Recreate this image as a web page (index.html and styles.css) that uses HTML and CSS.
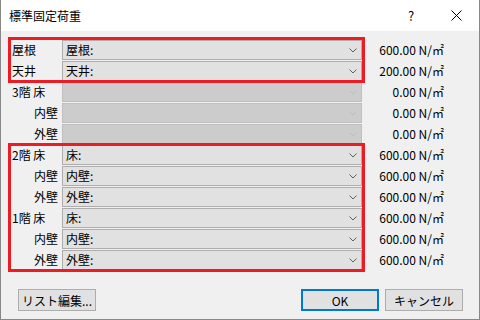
FILE: index.html
```html
<!DOCTYPE html>
<html lang="ja">
<head>
    <meta charset="UTF-8">
    <meta name="viewport" content="width=device-width, initial-scale=1.0">
    <title>標準固定荷重</title>
    <link rel="stylesheet" href="styles.css">
</head>
<body>
    <div class="window">
        <div class="titlebar">
            <span class="title">標準固定荷重</span>
            <span class="cap-btn help">?</span>
            <span class="cap-btn close">
                <svg width="11" height="11" viewBox="0 0 11 11"><path d="M0.5 0.5L10.5 10.5M10.5 0.5L0.5 10.5" stroke="#000" stroke-width="1" fill="none"/></svg>
            </span>
        </div>

        <div class="content">
            <div class="rows">
                <div class="row">
                    <span class="label">屋根</span>
                    <div class="combo"><span>屋根:</span><svg class="chev" width="8" height="5" viewBox="0 0 8 5"><path d="M0.5 0.5L4 4L7.5 0.5" /></svg></div>
                    <span class="value">600.00 N/㎡</span>
                </div>
                <div class="row">
                    <span class="label">天井</span>
                    <div class="combo"><span>天井:</span><svg class="chev" width="8" height="5" viewBox="0 0 8 5"><path d="M0.5 0.5L4 4L7.5 0.5" /></svg></div>
                    <span class="value">200.00 N/㎡</span>
                </div>
                <div class="row">
                    <span class="label">3階 床</span>
                    <div class="combo disabled"><span></span><svg class="chev" width="8" height="5" viewBox="0 0 8 5"><path d="M0.5 0.5L4 4L7.5 0.5" /></svg></div>
                    <span class="value">0.00 N/㎡</span>
                </div>
                <div class="row">
                    <span class="label sub">内壁</span>
                    <div class="combo disabled"><span></span><svg class="chev" width="8" height="5" viewBox="0 0 8 5"><path d="M0.5 0.5L4 4L7.5 0.5" /></svg></div>
                    <span class="value">0.00 N/㎡</span>
                </div>
                <div class="row">
                    <span class="label sub">外壁</span>
                    <div class="combo disabled"><span></span><svg class="chev" width="8" height="5" viewBox="0 0 8 5"><path d="M0.5 0.5L4 4L7.5 0.5" /></svg></div>
                    <span class="value">0.00 N/㎡</span>
                </div>
                <div class="row">
                    <span class="label">2階 床</span>
                    <div class="combo"><span>床:</span><svg class="chev" width="8" height="5" viewBox="0 0 8 5"><path d="M0.5 0.5L4 4L7.5 0.5" /></svg></div>
                    <span class="value">600.00 N/㎡</span>
                </div>
                <div class="row">
                    <span class="label sub">内壁</span>
                    <div class="combo"><span>内壁:</span><svg class="chev" width="8" height="5" viewBox="0 0 8 5"><path d="M0.5 0.5L4 4L7.5 0.5" /></svg></div>
                    <span class="value">600.00 N/㎡</span>
                </div>
                <div class="row">
                    <span class="label sub">外壁</span>
                    <div class="combo"><span>外壁:</span><svg class="chev" width="8" height="5" viewBox="0 0 8 5"><path d="M0.5 0.5L4 4L7.5 0.5" /></svg></div>
                    <span class="value">600.00 N/㎡</span>
                </div>
                <div class="row">
                    <span class="label">1階 床</span>
                    <div class="combo"><span>床:</span><svg class="chev" width="8" height="5" viewBox="0 0 8 5"><path d="M0.5 0.5L4 4L7.5 0.5" /></svg></div>
                    <span class="value">600.00 N/㎡</span>
                </div>
                <div class="row">
                    <span class="label sub">内壁</span>
                    <div class="combo"><span>内壁:</span><svg class="chev" width="8" height="5" viewBox="0 0 8 5"><path d="M0.5 0.5L4 4L7.5 0.5" /></svg></div>
                    <span class="value">600.00 N/㎡</span>
                </div>
                <div class="row">
                    <span class="label sub">外壁</span>
                    <div class="combo"><span>外壁:</span><svg class="chev" width="8" height="5" viewBox="0 0 8 5"><path d="M0.5 0.5L4 4L7.5 0.5" /></svg></div>
                    <span class="value">600.00 N/㎡</span>
                </div>
            </div>

            <!-- annotation frames drawn over the rows -->
            <div class="mark mark-roof"></div>
            <div class="mark mark-floors"></div>

            <div class="buttons">
                <button class="btn">リスト編集...</button>
                <button class="btn btn-ok">OK</button>
                <button class="btn">キャンセル</button>
            </div>
        </div>
    </div>
</body>
</html>
```

FILE: styles.css
```css
body { margin: 0; font-family: "Noto Sans CJK JP", "DejaVu Sans", sans-serif; font-size: 12px; color: #000; }
.window { width: 480px; height: 320px; box-sizing: border-box; border: 1px solid #888; border-top: none; background-color: #f0f0f0; display: flex; flex-direction: column; }

.titlebar { height: 31px; background-color: #fff; display: flex; align-items: center; padding-left: 8px; flex-shrink: 0; }
.title { font-size: 12px; line-height: 14px; }
.cap-btn { width: 46px; height: 31px; display: flex; align-items: center; justify-content: center; }
.help { margin-left: auto; font-size: 13px; }
.close { width: 45px; }
.close svg { display: block; }

.content { position: relative; flex: 1; }
.rows { padding: 9px 0 0 10px; }
.row { display: grid; grid-template-columns: 51px 300px 82px; height: 21px; }
.label { line-height: 19px; padding-left: 1px; white-space: nowrap; }
.label.sub { text-align: right; padding-right: 4px; padding-left: 0; }
.combo { height: 20px; box-sizing: border-box; border: 1px solid #adadad; background-color: #e1e1e1; display: flex; align-items: center; justify-content: space-between; padding: 0 4px 0 3px; line-height: 18px; }
.combo.disabled { background-color: #cccccc; border-color: #bfbfbf; }
.chev { display: block; fill: none; stroke: #606060; stroke-width: 1; }
.disabled .chev { stroke: #bcbcbc; }
.value { text-align: right; line-height: 19px; white-space: nowrap; }

.mark { position: absolute; left: 7px; width: 357px; box-sizing: border-box; border: 3px solid #ed1c24; }
.mark-roof { top: 6px; height: 46px; }
.mark-floors { top: 112px; height: 129px; }

.buttons { display: flex; gap: 6px; padding: 18px 16px 0 17px; }
.btn { width: 78px; height: 22px; box-sizing: border-box; border: 1px solid #adadad; background-color: #e1e1e1; font-family: inherit; font-size: 12px; padding: 0; color: #000; }
.btn-ok { margin-left: auto; border: 2px solid #0078d7; }
```
